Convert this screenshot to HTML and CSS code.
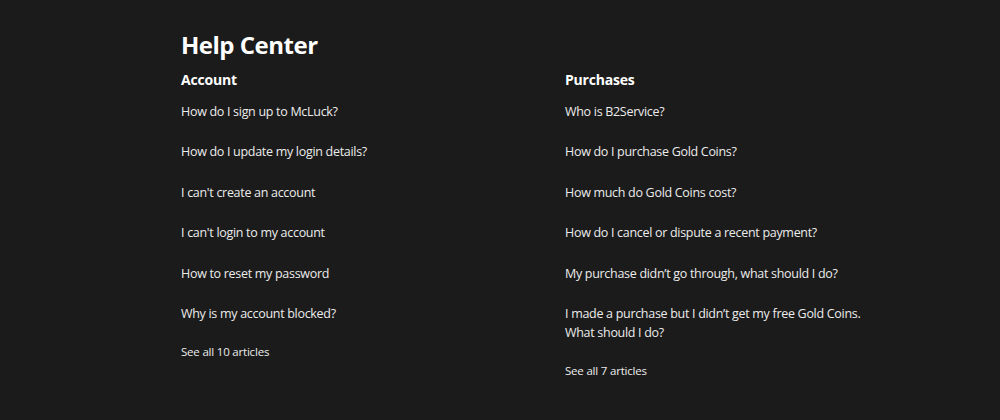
FILE: index.html
```html
<!DOCTYPE html>
<html>
<head>
<meta charset="utf-8">
<link rel="stylesheet" href="styles.css">
</head>
<body>
<main class="help">
  <h1 class="title">Help Center</h1>
  <div class="cols">
    <section class="col">
      <h2 class="col-title">Account</h2>
      <ul class="list">
        <li><a href="#">How do I sign up to McLuck?</a></li>
        <li><a href="#">How do I update my login details?</a></li>
        <li><a href="#">I can't create an account</a></li>
        <li><a href="#">I can't login to my account</a></li>
        <li><a href="#">How to reset my password</a></li>
        <li><a href="#">Why is my account blocked?</a></li>
      </ul>
      <a class="see-all" href="#">See all 10 articles</a>
    </section>
    <section class="col">
      <h2 class="col-title">Purchases</h2>
      <ul class="list">
        <li><a href="#">Who is B2Service?</a></li>
        <li><a href="#">How do I purchase Gold Coins?</a></li>
        <li><a href="#">How much do Gold Coins cost?</a></li>
        <li><a href="#">How do I cancel or dispute a recent payment?</a></li>
        <li><a href="#">My purchase didn’t go through, what should I do?</a></li>
        <li><a href="#">I made a purchase but I didn’t get my free Gold Coins. What should I do?</a></li>
      </ul>
      <a class="see-all" href="#">See all 7 articles</a>
    </section>
  </div>
</main>
</body>
</html>
```

FILE: styles.css
```css
html, body {
  margin: 0;
  padding: 0;
  background: #1b1b1b;
  color: #ececec;
  font-family: "Open Sans", "Noto Sans", sans-serif;
}
.help {
  padding: 29px 0 0 181px;
}
.title {
  margin: 0;
  font-size: 24px;
  line-height: 32px;
  font-weight: 700;
  color: #ffffff;
  letter-spacing: -0.5px;
}
.cols {
  display: grid;
  grid-template-columns: 384px 320px;
  margin-top: 9px;
}
.col-title {
  margin: 0 0 11.5px;
  font-size: 14px;
  line-height: 20px;
  font-weight: 700;
  color: #ffffff;
  letter-spacing: -0.2px;
}
.list {
  list-style: none;
  margin: 0;
  padding: 0;
  display: flex;
  flex-direction: column;
  gap: 21.6px;
}
.list li {
  font-size: 12.5px;
  line-height: 19px;
  max-width: 306px;
  letter-spacing: -0.3px;
}
.list a {
  color: #ececec;
  text-decoration: none;
}
.see-all {
  display: block;
  margin-top: 19px;
  font-size: 11.5px;
  line-height: 20px;
  color: #ececec;
  text-decoration: none;
  letter-spacing: -0.2px;
}
```
